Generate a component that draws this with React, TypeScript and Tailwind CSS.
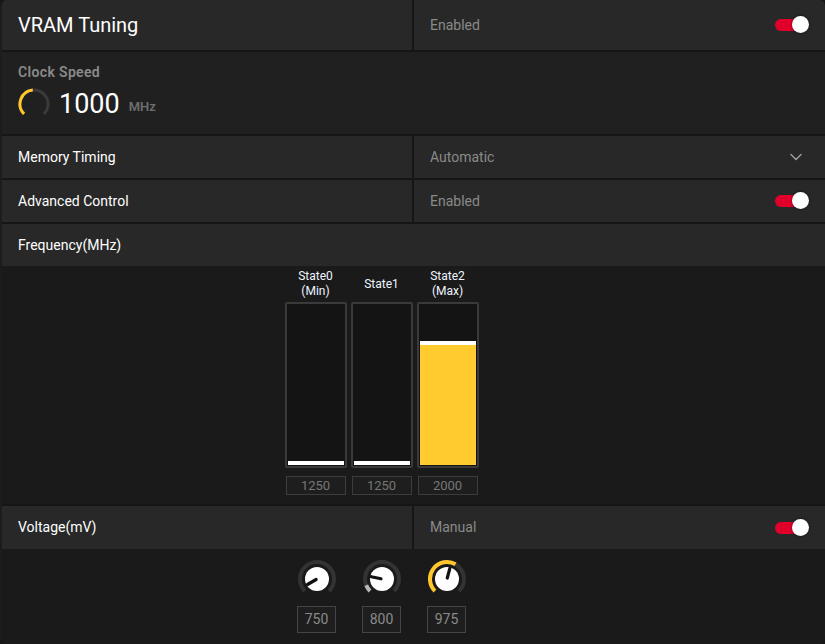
import { ChevronDown } from 'lucide-react';

const font = { fontFamily: 'Roboto, "Noto Sans", sans-serif' };

function pt(cx: number, cy: number, r: number, deg: number) {
  const a = (deg * Math.PI) / 180;
  return [cx + r * Math.sin(a), cy - r * Math.cos(a)];
}

function arc(cx: number, cy: number, r: number, from: number, to: number) {
  const [x1, y1] = pt(cx, cy, r, from);
  const [x2, y2] = pt(cx, cy, r, to);
  const large = to - from > 180 ? 1 : 0;
  return `M ${x1} ${y1} A ${r} ${r} 0 ${large} 1 ${x2} ${y2}`;
}

function Toggle() {
  return (
    <div className="relative w-[34px] h-[18px] flex items-center">
      <div className="w-[26px] h-[12px] rounded-full bg-[#e0002a]" />
      <div className="absolute right-0 top-0 w-[17px] h-[17px] rounded-full bg-white shadow-[0_0_3px_rgba(0,0,0,0.6)]" />
    </div>
  );
}

function Knob({ value, pointer, fill, fillColor }: { value: number; pointer: number; fill?: number; fillColor?: string }) {
  const [px, py] = pt(20, 20, 11, pointer);
  const [sx, sy] = pt(20, 20, 1, pointer);
  return (
    <div className="flex flex-col items-center gap-[7px] w-[40px]">
      <svg width="40" height="40" viewBox="0 0 40 40">
        <path d={arc(20, 20, 17, -135, 135)} stroke="#333333" strokeWidth="4" fill="none" />
        {fill !== undefined && (
          <path d={arc(20, 20, 17, -135, fill)} stroke={fillColor} strokeWidth="4" fill="none" />
        )}
        <circle cx="20" cy="20" r="12" fill="#ffffff" />
        <line x1={sx} y1={sy} x2={px} y2={py} stroke="#111" strokeWidth="3.2" strokeLinecap="round" />
      </svg>
      <div className="w-[39px] h-[27px] border border-[#454545] bg-[#1e1e1e] flex items-center justify-center text-[14px] text-[#8a8a8a]">
        {value}
      </div>
    </div>
  );
}

function StateBar({ label, sub, value, level }: { label: string; sub?: string; value: number; level: number }) {
  return (
    <div className="flex flex-col items-center w-[62px]">
      <div className="h-[32px] flex flex-col items-center justify-center text-[12px] leading-[15px] text-[#eef4ff]">
        <span>{label}</span>
        {sub && <span>{sub}</span>}
      </div>
      <div className="mt-[2px] w-[62px] h-[166px] border-2 border-[#3a3a3a] rounded-[2px] bg-[#141414] p-[1px] flex flex-col justify-end">
        <div className="w-full border-t-[4px] border-white bg-[#ffcb2f]" style={{ height: level }} />
      </div>
      <div className="mt-[8px] w-[60px] h-[19px] border border-[#3c3c3c] bg-[#1e1e1e] flex items-center justify-center text-[13px] text-[#777777]">
        {value}
      </div>
    </div>
  );
}

export default function App() {
  return (
    <div className="w-[825px] h-[644px] bg-[#161616] overflow-hidden" style={font}>
      <div className="h-full flex flex-col gap-[2px] rounded-md overflow-hidden border-l-2 border-[#1c1c1c]">
        {/* Header */}
        <div className="h-[50px] shrink-0 flex gap-[2px]">
          <div className="w-[410px] bg-[#282828] flex items-center px-[16px] text-[20px] text-white">VRAM Tuning</div>
          <div className="flex-1 bg-[#282828] flex items-center justify-between pl-[16px] pr-[16px] text-[14px] text-[#8a8a8a]">
            <span>Enabled</span>
            <Toggle />
          </div>
        </div>

        {/* Clock speed */}
        <div className="h-[82px] shrink-0 bg-[#202020] px-[16px] pt-[10px]">
          <div className="text-[14px] font-semibold text-[#8a8a8a] tracking-wide">Clock Speed</div>
          <div className="flex items-center gap-[9px] mt-[5px]">
            <svg width="32" height="32" viewBox="0 0 32 32">
              <path d={arc(16, 16, 14, -135, 135)} stroke="#3a3a3a" strokeWidth="3" fill="none" />
              <path d={arc(16, 16, 14, -135, -5)} stroke="#ffc72c" strokeWidth="3" fill="none" />
            </svg>
            <span className="text-[27px] text-white leading-none">1000</span>
            <span className="text-[13px] font-semibold text-[#6e6e6e] mt-[5px]">MHz</span>
          </div>
        </div>

        {/* Memory timing */}
        <div className="h-[42px] shrink-0 flex gap-[2px]">
          <div className="w-[410px] bg-[#282828] flex items-center px-[16px] text-[14px] text-white">Memory Timing</div>
          <div className="flex-1 bg-[#282828] flex items-center justify-between pl-[16px] pr-[19px] text-[14px] text-[#8a8a8a]">
            <span>Automatic</span>
            <ChevronDown className="w-[20px] h-[20px] text-[#a0a0a0]" strokeWidth={1.6} />
          </div>
        </div>

        {/* Advanced control */}
        <div className="h-[42px] shrink-0 flex gap-[2px]">
          <div className="w-[410px] bg-[#282828] flex items-center px-[16px] text-[14px] text-white">Advanced Control</div>
          <div className="flex-1 bg-[#282828] flex items-center justify-between pl-[16px] pr-[16px] text-[14px] text-[#8a8a8a]">
            <span>Enabled</span>
            <Toggle />
          </div>
        </div>

        {/* Frequency */}
        <div className="shrink-0 flex flex-col">
          <div className="h-[42px] bg-[#282828] flex items-center px-[16px] text-[14px] text-white">Frequency(MHz)</div>
          <div className="h-[238px] bg-[#1a1a1a] flex justify-center gap-[4px] pt-[2px] pr-[64px]">
            <StateBar label="State0" sub="(Min)" value={1250} level={4} />
            <StateBar label="State1" value={1250} level={4} />
            <StateBar label="State2" sub="(Max)" value={2000} level={124} />
          </div>
        </div>

        {/* Voltage */}
        <div className="flex-1 flex flex-col">
          <div className="h-[43px] shrink-0 flex gap-[2px]">
            <div className="w-[410px] bg-[#282828] flex items-center px-[16px] text-[14px] text-white">Voltage(mV)</div>
            <div className="flex-1 bg-[#282828] flex items-center justify-between pl-[16px] pr-[16px] text-[14px] text-[#8a8a8a]">
              <span>Manual</span>
              <Toggle />
            </div>
          </div>
          <div className="flex-1 bg-[#1a1a1a] flex justify-center gap-[25px] pt-[10px] pr-[64px]">
            <Knob value={750} pointer={-120} />
            <Knob value={800} pointer={-78} fill={-112} fillColor="#b8b8b8" />
            <Knob value={975} pointer={15} fill={30} fillColor="#ffc72c" />
          </div>
        </div>
      </div>
    </div>
  );
}
